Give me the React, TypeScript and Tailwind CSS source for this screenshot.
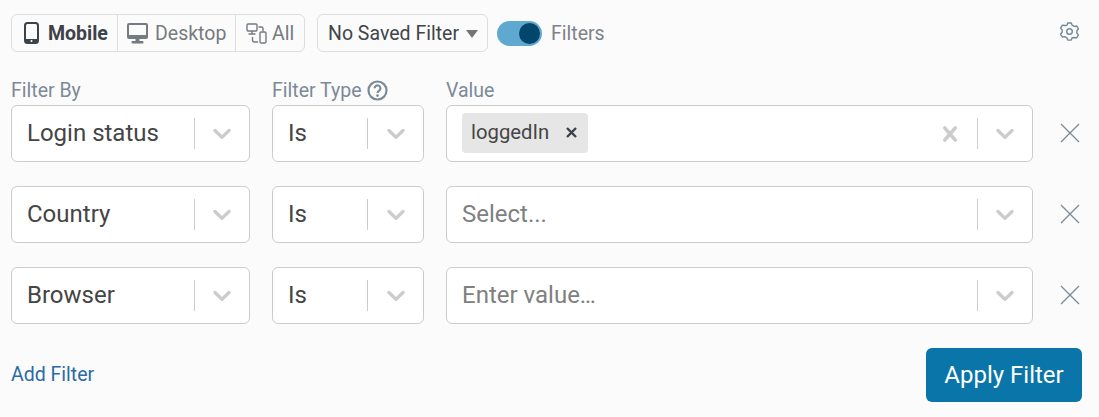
const Chevron = () => (
  <svg width="30" height="30" viewBox="0 0 20 20" className="fill-[#cccccc] shrink-0 mb-[2px]">
    <path d="M4.516 7.548c.436-.446 1.043-.481 1.576 0L10 11.295l3.908-3.747c.533-.481 1.141-.446 1.574 0 .436.445.408 1.197 0 1.615-.406.418-4.695 4.502-4.695 4.502a1.095 1.095 0 0 1-1.576 0S4.924 9.581 4.516 9.163s-.436-1.17 0-1.615z" />
  </svg>
);

const ClearX = () => (
  <svg width="30" height="30" viewBox="0 0 20 20" className="fill-[#cccccc] shrink-0">
    <path d="M14.348 14.849a1.2 1.2 0 0 1-1.697 0L10 11.819l-2.651 3.029a1.2 1.2 0 1 1-1.697-1.697l2.758-3.15-2.759-3.152a1.2 1.2 0 1 1 1.697-1.697L10 8.183l2.651-3.031a1.2 1.2 0 1 1 1.697 1.697l-2.758 3.152 2.758 3.15a1.2 1.2 0 0 1 0 1.698z" />
  </svg>
);

const RemoveX = () => (
  <svg width="20" height="20" viewBox="0 0 20 20" fill="none" stroke="#7b8a97" strokeWidth="1.3" className="shrink-0 mb-[2px] ml-[1px]">
    <path d="M1 1 L19 19 M19 1 L1 19" />
  </svg>
);

const Select = ({ w, children, clear, sep = "w-[54px]" }: { w: string; children: React.ReactNode; clear?: boolean; sep?: string }) => (
  <div className={`${w} h-[57px] flex items-center bg-white border border-[#cccccc] rounded-[6px] shrink-0`}>
    <div className="flex-1 min-w-0 flex items-center">{children}</div>
    {clear && (
      <div className="w-[30px] h-[30px] mr-[12px]">
        <ClearX />
      </div>
    )}
    <div className="w-[1px] h-[31px] bg-[#cccccc]" />
    <div className={`${sep} flex justify-center`}>
      <Chevron />
    </div>
  </div>
);

const Row = ({ field, type = "Is", value, clear }: { field: string; type?: string; value: React.ReactNode; clear?: boolean }) => (
  <div className="flex items-center h-[57px]">
    <Select w="w-[239px]">
      <span className="pl-[15px] pb-[2px] text-[24px] text-[#454545]">{field}</span>
    </Select>
    <div className="w-[22px]" />
    <Select w="w-[152px]" sep="w-[55px]">
      <span className="pl-[15px] pb-[2px] text-[24px] text-[#454545]">{type}</span>
    </Select>
    <div className="w-[22px]" />
    <Select w="w-[587px]" clear={clear}>
      {value}
    </Select>
    <div className="w-[26px]" />
    <RemoveX />
  </div>
);

const Segment = ({ children, className = "" }: { children: React.ReactNode; className?: string }) => (
  <div className={`h-full flex items-center ${className}`}>{children}</div>
);

export default function App() {
  return (
    <div
      className="w-[1099px] h-[417px] bg-[#fbfbfb] pl-[11px] pr-[17px] pt-[14px] overflow-hidden"
      style={{ fontFamily: "Roboto, sans-serif" }}
    >
      <div className="flex items-center h-[38px]">
        <div className="flex items-center h-[38px] w-[294px] border border-[#dddddd] rounded-[6px] text-[19.5px]">
          <Segment className="w-[106px] pl-[12px] gap-[9px] font-bold text-[#3b4248] border-r border-[#dddddd]">
            <svg width="15" height="22" viewBox="0 0 15 22" className="shrink-0">
              <rect x="1" y="1" width="13" height="20" rx="2.5" fill="none" stroke="#3b4248" strokeWidth="2" />
              <rect x="1" y="17" width="13" height="4" fill="#3b4248" />
              <circle cx="7.5" cy="19" r="1" fill="#ffffff" />
            </svg>
            <span className="pt-[2px]">Mobile</span>
          </Segment>
          <Segment className="w-[118px] pl-[9px] gap-[7px] text-[#757b80] border-r border-[#dddddd]">
            <svg width="21" height="21" viewBox="0 0 21 21" className="shrink-0">
              <rect x="1" y="1" width="19" height="14" rx="1" fill="none" stroke="#757b80" strokeWidth="2" />
              <rect x="1" y="12" width="19" height="3" fill="#757b80" />
              <rect x="8.5" y="15" width="4" height="4" fill="#757b80" />
              <rect x="4.5" y="18" width="12" height="2.5" rx="1" fill="#757b80" />
            </svg>
            <span className="pt-[2px]">Desktop</span>
          </Segment>
          <Segment className="flex-1 pl-[10px] gap-[5px] text-[#757b80]">
            <svg width="21" height="21" viewBox="0 0 21 21" fill="none" stroke="#757b80" strokeWidth="1.4" className="shrink-0">
              <rect x="1" y="1" width="10" height="7" rx="1" />
              <path d="M6 8v3M2.5 11h7" />
              <rect x="14" y="9" width="6" height="11" rx="1.2" />
              <path d="M12.5 4h3a1.5 1.5 0 0 1 1.5 1.5V8.5M12 19H8.5a2 2 0 0 1-2-2v-3" />
            </svg>
            <span className="pt-[2px]">All</span>
          </Segment>
        </div>
        <div className="ml-[12px] w-[171px] h-[38px] flex items-center pl-[10px] gap-[7px] border border-[#dddddd] rounded-[6px] text-[19.5px] text-[#3f4549]">
          <span className="pt-[2px]">No Saved Filter</span>
          <svg width="12" height="8" viewBox="0 0 12 8" className="shrink-0 mt-[2px]">
            <path d="M0 0h12L6 8z" fill="#757575" />
          </svg>
        </div>
        <div className="ml-[9px] w-[45px] h-[25px] rounded-full bg-[#5fa9d1] flex items-center justify-end pr-[2px]">
          <div className="w-[21px] h-[21px] rounded-full bg-[#03466b]" />
        </div>
        <span className="ml-[9px] pt-[2px] text-[19.5px] text-[#7d8388]">Filters</span>
        <svg width="21" height="21" viewBox="0 0 24 24" fill="none" stroke="#73889b" strokeWidth="1.6" strokeLinejoin="round" className="ml-auto mr-[2px] mt-[-3px]">
          <path d="M10 2.2h4l1 2.6 2.4 1.4 2.8-.5 2 3.4-1.8 2.1v2.6l1.8 2.1-2 3.4-2.8-.5L15 19.2l-1 2.6h-4l-1-2.6-2.4-1.4-2.8.5-2-3.4 1.8-2.1v-2.6L1.8 8.1l2-3.4 2.8.5L9 4.8z" />
          <circle cx="12" cy="12" r="3.2" />
        </svg>
      </div>

      <div className="flex items-center h-[25px] mt-[26px] text-[19.5px] text-[#7b8a97]">
        <span className="w-[261px]">Filter By</span>
        <span className="w-[174px] flex items-center gap-[5px]">
          Filter Type
          <svg width="21" height="21" viewBox="0 0 21 21" fill="none" className="shrink-0">
            <circle cx="10.5" cy="10.5" r="9" stroke="#7b8a97" strokeWidth="2.2" />
            <path d="M7.6 8.3a2.9 2.9 0 1 1 4.6 2.3c-1 .7-1.7 1.2-1.7 2.4" stroke="#7b8a97" strokeWidth="2.1" />
            <circle cx="10.5" cy="15.6" r="1.3" fill="#7b8a97" />
          </svg>
        </span>
        <span>Value</span>
      </div>

      <div className="flex flex-col gap-[24px] mt-[2px]">
        <Row
          field="Login status"
          clear
          value={
            <div className="ml-[15px] h-[40px] w-[126px] bg-[#e6e6e6] rounded-[4px] flex items-center pl-[9px] gap-[17px] mb-[2px]">
              <span className="text-[20.3px] text-[#454545]">loggedIn</span>
              <svg width="11" height="11" viewBox="0 0 11 11" stroke="#3b4248" strokeWidth="2.4" className="shrink-0">
                <path d="M1 1l9 9M10 1l-9 9" />
              </svg>
            </div>
          }
        />
        <Row field="Country" value={<span className="pl-[15px] pb-[2px] text-[24px] text-[#808080]">Select...</span>} />
        <Row field="Browser" value={<span className="pl-[15px] pb-[2px] text-[24px] text-[#808080]">Enter value…</span>} />
      </div>

      <div className="flex items-center justify-between mt-[24px] h-[54px]">
        <a className="text-[19.5px] text-[#2a6aa8]">Add Filter</a>
        <button className="w-[156px] h-[54px] rounded-[6px] bg-[#0a75a8] text-white text-[24px]">Apply Filter</button>
      </div>
    </div>
  );
}
